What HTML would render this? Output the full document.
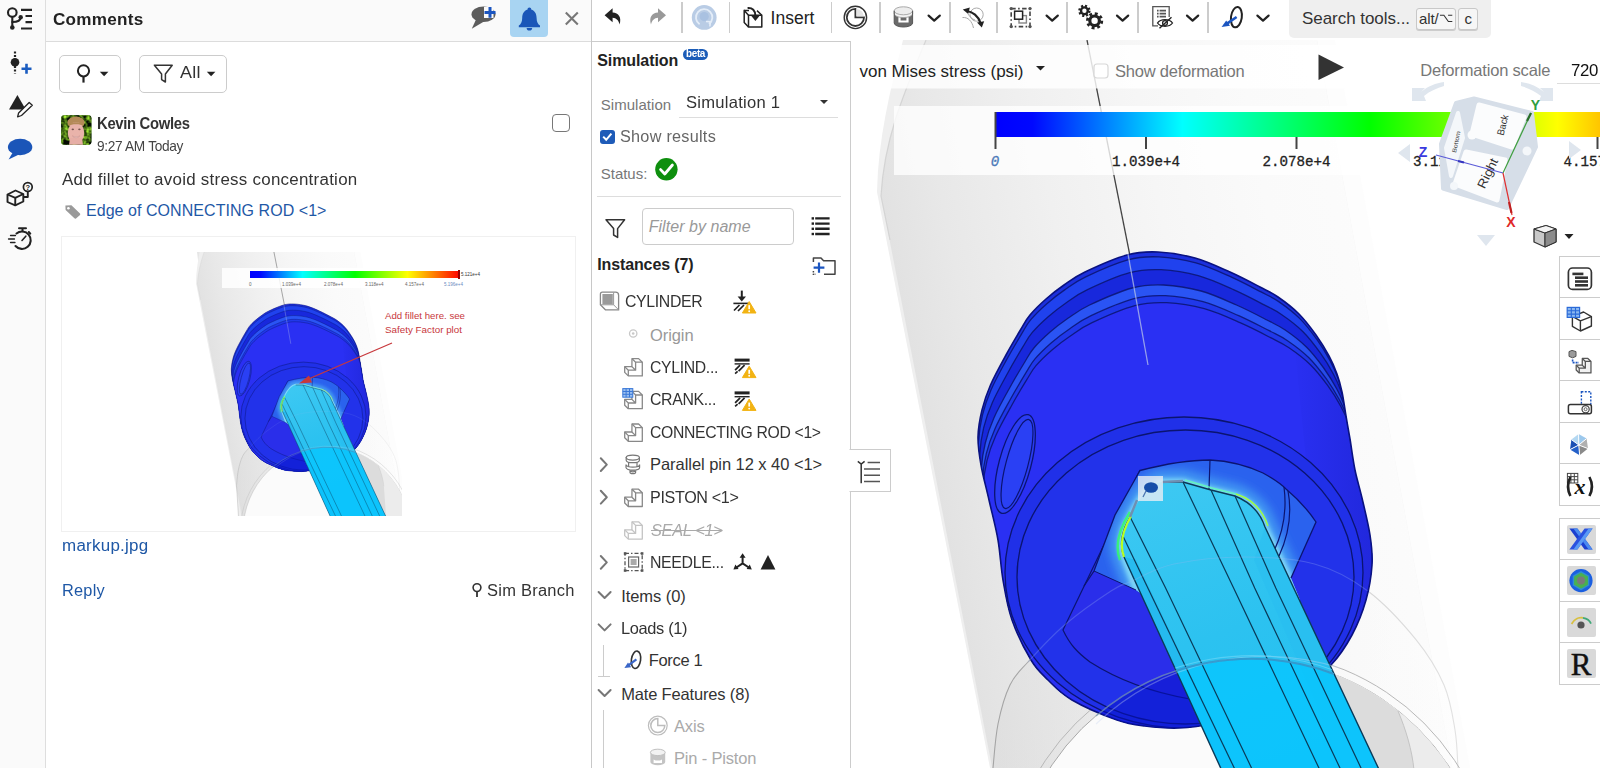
<!DOCTYPE html>
<html lang="en">
<head>
<meta charset="utf-8">
<title>Simulation - Comments</title>
<style>
*{box-sizing:border-box;margin:0;padding:0}
html,body{width:1600px;height:768px;overflow:hidden;background:#fff;font-family:"Liberation Sans",sans-serif;color:#333}
.abs{position:absolute}
.t{position:absolute;white-space:nowrap;line-height:1;font-family:"Liberation Sans",sans-serif}
#leftbar{position:absolute;left:0;top:0;width:45px;height:768px;background:#fafafa}
#lbborder{position:absolute;left:45px;top:0;width:1px;height:768px;background:#dedede}
#comments{position:absolute;left:46px;top:0;width:545px;height:768px;background:#fff}
#chead{position:absolute;left:0;top:0;width:545px;height:42px;background:#fafafa;border-bottom:1px solid #dcdcdc}
#cborder{position:absolute;left:591px;top:0;width:1px;height:768px;background:#c8c8c8}
#toolbar{position:absolute;left:592px;top:0;width:1008px;height:41px;background:#fff}
#simpanel{position:absolute;left:592px;top:41px;width:259px;height:727px;background:#fff;border-top:1px solid #ccc;border-right:1px solid #ccc}
#viewport{position:absolute;left:851px;top:40px;width:749px;height:728px;overflow:hidden}
.btn{position:absolute;border:1px solid #ccc;border-radius:4px;background:#fff}
</style>
</head>
<body>
<div id="leftbar"></div><div id="lbborder"></div>
<svg class="abs" style="left:0;top:0" width="45" height="260" viewBox="0 0 45 260">
<!-- versions/history -->
<g fill="none" stroke="#222" stroke-width="2.1" stroke-linecap="round">
<circle cx="12.3" cy="12.5" r="4.3"/>
<path d="M12.3 17 L12.3 27"/>
<path d="M12.3 22 C17 22 20.5 21.5 20.5 17.5"/>
<path d="M21 9.8 L32 9.8 M25.5 16 L32 16 M25.5 22.2 L32 22.2 M21 28.5 L32 28.5" stroke-linecap="butt" stroke-width="2.2"/>
</g>
<circle cx="12.3" cy="27.5" r="2.3" fill="#222"/><circle cx="20.7" cy="17.2" r="2.2" fill="#222"/>
<!-- version + -->
<path d="M15 51.5 L15 73.5" stroke="#222" stroke-width="2.2" stroke-dasharray="2 1.6" fill="none"/>
<circle cx="15" cy="62.2" r="4.3" fill="#222"/>
<path d="M21.5 68.7 L31.5 68.7 M26.5 63.7 L26.5 73.7" stroke="#1b5cc0" stroke-width="2.6" fill="none"/>
<!-- triangle + pencil -->
<path d="M17.4 95 L9 109.5 L25.7 109.5Z" fill="#222"/>
<path d="M29.2 102.5 L32.3 105.2 L21.5 115.5 L17.6 116.8 L18.6 113 Z" fill="#fff" stroke="#222" stroke-width="1.3" stroke-linejoin="round"/>
<!-- speech bubble -->
<ellipse cx="20.1" cy="147" rx="12.2" ry="8.2" fill="#1b55b8"/>
<path d="M13 152 L8.6 159.5 L20 154Z" fill="#1b55b8"/>
<!-- cube ? -->
<g fill="none" stroke="#222" stroke-width="1.9" stroke-linejoin="round">
<path d="M7.5 194.5 L15.5 190.5 L23.3 194 L23.3 201.5 L15.2 205.3 L7.5 202Z"/>
<path d="M7.5 194.5 L15.3 197.8 L23.3 194 M15.3 197.8 L15.2 205.3"/>
<path d="M23.3 197 L27.8 197 L27.8 192"/>
<circle cx="27.8" cy="187" r="4.4" stroke-width="1.7"/>
</g>
<text x="27.8" y="189.8" font-family="'Liberation Sans',sans-serif" font-size="7.5" font-weight="700" text-anchor="middle" fill="#222">?</text>
<!-- stopwatch -->
<g fill="none" stroke="#222" stroke-width="2.1" stroke-linecap="round">
<path d="M16.5 233.5 A8.7 8.7 0 1 1 15.5 246"/>
<path d="M19 228.3 L26 228.3 M22.5 228.3 L22.5 231.3 M28.8 232 L30.3 233.6" stroke-width="2"/>
<path d="M22 240.5 L25.8 236.2" stroke-width="1.6"/>
<path d="M10.5 235.5 L15.5 235.5 M8.5 239 L14.5 239 M10.5 242.5 L15 242.5" stroke-width="1.3"/>
</g>
</svg>
<div id="comments"><div id="chead"></div></div>
<div id="cborder"></div>
<!-- comments header -->
<span class="t" style="left:52.6px;top:11.8px;font-size:16px;font-weight:700;color:#222;letter-spacing:0.250px;transform:scaleX(1.0687);transform-origin:0 0;">Comments</span>
<div class="abs" style="left:510px;top:0;width:38px;height:37px;background:#a8d4f2;border-radius:0 0 4px 4px"></div>
<!-- buttons -->
<div class="btn" style="left:59px;top:55px;width:62px;height:38px;border-radius:5px"></div>
<div class="btn" style="left:139px;top:55px;width:88px;height:38px;border-radius:5px"></div>
<span class="t" style="left:180.0px;top:64.0px;font-size:17px;font-weight:400;color:#333;letter-spacing:0.250px;transform:scaleX(1.0538);transform-origin:0 0;">All</span>
<!-- comment -->
<span class="t" style="left:97.0px;top:114.9px;font-size:16.4px;font-weight:700;color:#333;letter-spacing:-0.350px;transform:scaleX(0.9050);transform-origin:0 0;">Kevin Cowles</span>
<span class="t" style="left:96.8px;top:138.5px;font-size:14.5px;font-weight:400;color:#444;letter-spacing:-0.350px;transform:scaleX(0.9439);transform-origin:0 0;">9:27 AM Today</span>
<div class="abs" style="left:552px;top:114px;width:18px;height:18px;border:1.5px solid #777;border-radius:4px;background:#fff"></div>
<span class="t" style="left:62.2px;top:172.0px;font-size:16px;font-weight:400;color:#333;letter-spacing:0.250px;transform:scaleX(1.0573);transform-origin:0 0;">Add fillet to avoid stress concentration</span>
<span class="t" style="left:86.0px;top:202.7px;font-size:16px;font-weight:400;color:#1f58a6;letter-spacing:0.050px;">Edge of CONNECTING ROD &lt;1&gt;</span>
<div class="abs" id="imgbox" style="left:61px;top:236px;width:515px;height:296px;border:1px solid #f0f0f0;background:#fff"></div>
<span class="t" style="left:61.5px;top:537.5px;font-size:16px;font-weight:400;color:#1f58a6;letter-spacing:0.250px;transform:scaleX(1.0594);transform-origin:0 0;">markup.jpg</span>
<span class="t" style="left:61.5px;top:582.8px;font-size:16px;font-weight:400;color:#1f58a6;letter-spacing:0.250px;transform:scaleX(1.0200);transform-origin:0 0;">Reply</span>
<span class="t" style="left:487.0px;top:582.8px;font-size:16px;font-weight:400;color:#333;letter-spacing:0.250px;transform:scaleX(1.0294);transform-origin:0 0;">Sim Branch</span>
<svg class="abs" style="left:46px;top:42px" width="545" height="570" viewBox="46 42 545 570">
<defs>
<filter id="leaf" x="0" y="0" width="100%" height="100%" color-interpolation-filters="sRGB">
<feTurbulence type="fractalNoise" baseFrequency="0.22" numOctaves="2" seed="7" result="n"/>
<feColorMatrix in="n" type="matrix" values="1.6 0 0 0 -0.55  2.2 0 0 0 -0.72  0.5 0 0 0 -0.18  0 0 0 0 1"/>

</filter>
<clipPath id="cpAv"><rect x="61.2" y="115.2" width="30.2" height="29.6" rx="3"/></clipPath>
</defs>
<!-- pin button icon -->
<circle cx="83.5" cy="70.8" r="5.6" fill="none" stroke="#222" stroke-width="2"/>
<path d="M83.5 76.4 L83.5 82.6" stroke="#222" stroke-width="2.2" fill="none"/>
<path d="M99.8 71.8 L108.4 71.8 L104.1 76.2Z" fill="#222"/>
<!-- funnel -->
<path d="M154.4 65.2 L172.2 65.2 L165.4 74 L165.4 82 L161.6 79.6 L161.6 74Z" fill="none" stroke="#333" stroke-width="1.5" stroke-linejoin="round"/>
<path d="M206.8 71.8 L215.4 71.8 L211.1 76.2Z" fill="#222"/>
<!-- avatar -->
<g clip-path="url(#cpAv)">
<rect x="61" y="115" width="31" height="30" fill="#2c6414"/>
<rect x="61" y="115" width="31" height="30" filter="url(#leaf)" opacity="0.9"/>
<ellipse cx="76" cy="122.5" rx="8.6" ry="6" fill="#b48a58"/>
<ellipse cx="76" cy="133" rx="8.2" ry="11" fill="#e9b3aa"/>
<path d="M69 145 L70 138 L82 138 L83 145Z" fill="#e6aea6"/>
<path d="M68.5 126 C70 121 82 121 83.5 126 C81 123.6 71 123.6 68.5 126Z" fill="#b48a58"/>
<ellipse cx="72.8" cy="129.4" rx="1.2" ry="0.8" fill="#7a5650"/><ellipse cx="79.4" cy="129.4" rx="1.2" ry="0.8" fill="#7a5650"/>
<path d="M72.4 136 C74.4 138.2 77.8 138.2 79.8 136 C77.8 137 74.4 137 72.4 136Z" fill="#fff" stroke="#c98a84" stroke-width="0.6"/>
</g>
<!-- tag -->
<path d="M65.4 205.6 L71.4 205.2 L80 213.4 Q80.6 214.2 80 215 L76 218.4 Q75.2 219 74.4 218.2 L65.6 210Z" fill="#9a9a9a"/>
<circle cx="68.4" cy="208.2" r="1.3" fill="#fff"/>
<!-- sim branch pin -->
<circle cx="477" cy="587.6" r="3.9" fill="none" stroke="#333" stroke-width="1.6"/>
<path d="M477 591.6 L477 597" stroke="#333" stroke-width="1.8" fill="none"/>
</svg>
<svg class="abs" style="left:62px;top:237px" width="513" height="294" viewBox="62 237 513 294">
<defs><clipPath id="cpThumb"><rect x="190" y="252" width="212" height="264"/></clipPath></defs>
<g clip-path="url(#cpThumb)">
<path d="M197 252 L232 252 L232 336 L207.5 336Z" fill="#e6e6e6"/>
<use href="#scene" transform="translate(-111,215.3) scale(0.35,0.352)"/>
</g>
<!-- legend -->
<rect x="222" y="268" width="258" height="20" fill="#fff" fill-opacity="0.85"/>
<rect x="250" y="271" width="210" height="7" fill="url(#gLegend)"/>
<rect x="458" y="270" width="2" height="9" fill="#900"/>
<g font-family="'Liberation Sans',sans-serif" font-size="4.5" fill="#666">
<text x="249" y="286">0</text><text x="282" y="286">1.039e+4</text><text x="324" y="286">2.078e+4</text><text x="365" y="286">3.118e+4</text><text x="405" y="286">4.157e+4</text><text x="444" y="286" fill="#6a8ac0">5.196e+4</text><text x="461" y="276" fill="#333">5.121e+4</text>
</g>
<!-- annotation -->
<g font-family="'Liberation Sans',sans-serif" font-size="9.3" fill="#c8383c">
<text x="385" y="319" textLength="80" lengthAdjust="spacingAndGlyphs">Add fillet here. see</text>
<text x="385" y="333" textLength="77" lengthAdjust="spacingAndGlyphs">Safety Factor plot</text>
</g>
<path d="M392 343 L306 380" stroke="#c8383c" stroke-width="1.3" fill="none"/>
<path d="M299 383.5 L309 375.5 L312 382.5Z" fill="#c8383c"/>
</svg>
<div id="toolbar"></div>
<div class="abs" style="left:1289px;top:0;width:202px;height:38px;background:#efefef;border-radius:0 0 5px 5px"></div>
<span class="t" style="left:770.5px;top:10.2px;font-size:17.5px;font-weight:400;color:#222;letter-spacing:0.039px;">Insert</span>
<span class="t" style="left:1302.0px;top:10.0px;font-size:17px;font-weight:400;color:#333;letter-spacing:-0.044px;">Search tools...</span>
<div class="abs" style="left:1416px;top:8px;width:40px;height:22px;border:1px solid #c8c8c8;border-radius:3px;background:#f6f6f6;box-shadow:0 1px 0 #ccc"></div>
<div class="abs" style="left:1458px;top:8px;width:20px;height:22px;border:1px solid #c8c8c8;border-radius:3px;background:#f6f6f6;box-shadow:0 1px 0 #ccc"></div>
<span class="t" style="left:1419.0px;top:11.3px;font-size:15px;font-weight:400;color:#333;letter-spacing:-0.127px;">alt/</span><span class="t" style="left:1438.8px;top:10.5px;font-size:13px;color:#333;font-family:'DejaVu Sans',sans-serif;transform:scaleX(0.95);transform-origin:0 0">⌥</span>
<span class="t" style="left:1464.5px;top:11.3px;font-size:15px;font-weight:400;color:#333;letter-spacing:0.000px;">c</span>
<!-- separators -->
<div class="abs" style="left:681px;top:2px;width:1.5px;height:31px;background:#ccc"></div>
<div class="abs" style="left:728.5px;top:2px;width:1.5px;height:31px;background:#ccc"></div>
<div class="abs" style="left:830.5px;top:2px;width:1.5px;height:31px;background:#ccc"></div>
<div class="abs" style="left:879px;top:2px;width:1.5px;height:31px;background:#ccc"></div>
<div class="abs" style="left:949px;top:2px;width:1.5px;height:31px;background:#ccc"></div>
<div class="abs" style="left:996px;top:2px;width:1.5px;height:31px;background:#ccc"></div>
<div class="abs" style="left:1066px;top:2px;width:1.5px;height:31px;background:#ccc"></div>
<div class="abs" style="left:1137px;top:2px;width:1.5px;height:31px;background:#ccc"></div>
<div class="abs" style="left:1207px;top:2px;width:1.5px;height:31px;background:#ccc"></div>
<svg class="abs" style="left:460px;top:0" width="1140" height="41" viewBox="460 0 1140 41">
<!-- comment+ -->
<ellipse cx="483.5" cy="14.2" rx="12" ry="7.8" fill="#5c5c5c"/>
<path d="M476 19.5 L471.8 28.8 L484 21.5Z" fill="#5c5c5c"/>
<rect x="484" y="7" width="9.5" height="11" fill="#fafafa"/>
<path d="M484.5 12.4 L495.5 12.4 M490 7 L490 17.8" stroke="#1b55c0" stroke-width="3" fill="none"/>
<!-- bell -->
<path d="M529.4 7.6 C530.6 7.6 531.2 8.4 531.2 9.4 C535 10.6 536.6 13.8 536.6 18 C536.6 22 538 24.2 540 25.6 L540 27.2 L518.8 27.2 L518.8 25.6 C520.8 24.2 522.2 22 522.2 18 C522.2 13.8 523.8 10.6 527.6 9.4 C527.6 8.4 528.2 7.6 529.4 7.6Z" fill="#1a56b8"/>
<path d="M526.6 28 L532.2 28 C532.2 29.6 531 30.6 529.4 30.6 C527.8 30.6 526.6 29.6 526.6 28Z" fill="#1a56b8"/>
<!-- close -->
<path d="M565.8 12.6 L577.8 24.6 M577.8 12.6 L565.8 24.6" stroke="#777" stroke-width="2.1" fill="none"/>
<!-- undo -->
<path d="M604.6 15.2 L612.6 8.2 L612.6 12.6 C618.6 12.8 621.8 17.4 619.6 24.6 C618.6 20.4 616.4 18 612.6 17.8 L612.6 22.2Z" fill="#222"/>
<!-- redo -->
<path d="M666 15.2 L658 8.2 L658 12.6 C652 12.8 648.8 17.4 651 24.6 C652 20.4 654.2 18 658 17.8 L658 22.2Z" fill="#999"/>
<!-- rebuild circle (disabled) -->
<circle cx="704.2" cy="17.4" r="12.4" fill="#b9cce5"/>
<path d="M699.6 24.2 A8.2 8.2 0 1 1 709 24" fill="none" stroke="#e4edf8" stroke-width="1.8"/>
<path d="M706 21.5 L710.5 21.8 L709.8 26.5" fill="none" stroke="#e4edf8" stroke-width="1.6"/>
<circle cx="704.2" cy="16.6" r="4.6" fill="#a9c1e1"/>
<!-- insert -->
<g fill="none" stroke="#222" stroke-width="1.5" stroke-linejoin="round">
<path d="M748.5 15.2 L761.8 15.2 L761.8 27 L748.5 27Z" fill="#fff"/>
<path d="M748.5 15.2 L744.2 10.4 L744.2 22.6 L748.5 27"/>
<path d="M744.2 10.4 L749 10.4 M757 10.6 L761.8 15.2"/>
<path d="M747.6 8 C752.4 7.6 755.4 10.4 755.4 16" stroke-width="2"/>
</g>
<path d="M751 15.6 L759.8 15.6 L755.4 21Z" fill="#222"/>
<!-- clock/mate -->
<g fill="none" stroke="#333">
<circle cx="855.4" cy="17.4" r="11.2" stroke-width="1.4"/>
<path d="M855.4 8.8 A8.6 8.6 0 1 0 864 17.4 L855.4 17.4Z" stroke-width="1.8"/>
</g>
<path d="M856.6 8.9 A8.6 8.6 0 0 1 863.9 16.2 L856.6 16.2Z" fill="#e3e3e3"/>
<!-- cylinder/fastened -->
<path d="M894.2 10.8 L894.2 23 A9.2 4 0 0 0 912.6 23 L912.6 10.8Z" fill="#6a6a6a"/>
<path d="M894.2 10.8 L894.2 13.6 A9.2 4 0 0 0 912.6 13.6 L912.6 10.8Z" fill="#f2f2f2" stroke="#999" stroke-width="0.8"/>
<ellipse cx="903.4" cy="10.8" rx="9.2" ry="4" fill="#ededed" stroke="#aaa" stroke-width="1"/>
<path d="M898.4 17.2 L898.4 22.6 L908.6 22.6 L908.6 17.2 L906.4 17.8 L906.4 20.6 L900.6 20.6 L900.6 17.8Z" fill="#fff"/>
<path d="M894.2 10.8 L894.2 23 A9.2 4 0 0 0 912.6 23 L912.6 10.8" fill="none" stroke="#555" stroke-width="1"/>
<!-- chevrons -->
<g fill="none" stroke="#222" stroke-width="2.2" stroke-linecap="round" stroke-linejoin="round">
<path d="M928.6 15.6 L934.2 20.6 L939.8 15.6"/>
<path d="M1046.6 15.6 L1052.2 20.6 L1057.8 15.6"/>
<path d="M1117 15.6 L1122.6 20.6 L1128.2 15.6"/>
<path d="M1187 15.6 L1192.6 20.6 L1198.2 15.6"/>
<path d="M1257.4 15.6 L1263 20.6 L1268.6 15.6"/>
</g>
<!-- animate arrows -->
<circle cx="976.6" cy="14.6" r="6.6" fill="none" stroke="#aaa" stroke-width="1"/>
<path d="M962.5 17.5 C968 17 972 21 973.5 28 M968 14 C970 17 972 19 975 20" fill="none" stroke="#aaa" stroke-width="1"/>
<path d="M966.5 11 C972.5 11.5 978.5 16 980.5 23" fill="none" stroke="#222" stroke-width="2.2"/>
<path d="M962.8 9.4 L969.8 7.6 L968.2 14Z" fill="#222"/>
<path d="M981.8 27.6 L977 22.4 L984.2 21.2Z" fill="#222"/>
<!-- select other -->
<g fill="none" stroke="#444">
<rect x="1011.2" y="8.6" width="18.8" height="18" stroke-width="1.6" stroke-dasharray="4.5 2.4 1.6 2.4"/>
<rect x="1019" y="15.6" width="7.4" height="7.4" stroke="#888" stroke-width="1.4"/>
<rect x="1014.6" y="11.2" width="8" height="8" stroke="#222" stroke-width="1.5" fill="#fff"/>
</g>
<g fill="#555"><circle cx="1011.2" cy="8.6" r="1.7"/><circle cx="1030" cy="8.6" r="1.7"/><circle cx="1011.2" cy="26.6" r="1.7"/><circle cx="1030" cy="26.6" r="1.7"/></g>
<!-- gears -->
<g fill="none" stroke="#222">
<circle cx="1084.4" cy="10.8" r="3.4" stroke-width="2.4"/>
<circle cx="1084.4" cy="10.8" r="5" stroke-width="2.4" stroke-dasharray="2 1.93"/>
<circle cx="1094.6" cy="20.8" r="4.8" stroke-width="3.2"/>
<circle cx="1094.6" cy="20.8" r="7.2" stroke-width="2.8" stroke-dasharray="2.9 2.75"/>
</g>
<!-- doc + eye -->
<g fill="none" stroke="#555" stroke-width="1.3">
<path d="M1169.2 17 L1169.2 6.6 L1152.8 6.6 L1152.8 25.8 L1158 25.8"/>
<path d="M1157 10.6 L1166 10.6 M1157 13.6 L1166 13.6 M1157 16.6 L1166 16.6" stroke-width="1.7" stroke-dasharray="1.6 1 20"/>
<path d="M1157.5 23 C1160.5 18.6 1169.5 18.6 1172.5 23 C1169.5 27.4 1160.5 27.4 1157.5 23Z" stroke="#222" stroke-width="1.3"/>
<circle cx="1165" cy="23" r="2.4" stroke="#222"/>
<path d="M1159.5 28.2 L1171.5 17.2" stroke="#222" stroke-width="1.4"/>
</g>
<!-- force -->
<ellipse cx="1236.4" cy="17.2" rx="5.4" ry="10.2" transform="rotate(8 1236.4 17.2)" fill="none" stroke="#222" stroke-width="2"/>
<path d="M1236.6 17 L1227 23.6" stroke="#1b55c0" stroke-width="2.6" fill="none"/>
<path d="M1221.6 27 L1226.2 20.4 L1230 25.8Z" fill="#1b55c0"/>
</svg>
<div id="simpanel"></div>
<span class="t" style="left:597.2px;top:53.2px;font-size:16px;font-weight:700;color:#222;letter-spacing:-0.078px;">Simulation</span>
<div class="abs" style="left:682.5px;top:49px;width:25px;height:11px;background:#1b5cb8;border-radius:6px"></div>
<span class="t" style="left:685.5px;top:49.1px;font-size:10px;font-weight:700;color:#fff;letter-spacing:-0.350px;transform:scaleX(0.9916);transform-origin:0 0;">beta</span>
<span class="t" style="left:600.8px;top:96.5px;font-size:15px;font-weight:400;color:#777;letter-spacing:0.037px;">Simulation</span>
<span class="t" style="left:686.2px;top:94.3px;font-size:16.5px;font-weight:400;color:#333;letter-spacing:0.250px;transform:scaleX(1.0053);transform-origin:0 0;">Simulation 1</span>
<div class="abs" style="left:678.5px;top:116.5px;width:159px;height:1px;background:#ddd"></div>
<div class="abs" style="left:820px;top:99.5px;width:0;height:0;border-left:4.5px solid transparent;border-right:4.5px solid transparent;border-top:4.5px solid #333"></div>
<div class="abs" style="left:600px;top:129.5px;width:14.5px;height:14.5px;background:#1e5bb8;border-radius:3px"></div>
<span class="t" style="left:620.0px;top:129.0px;font-size:16px;font-weight:400;color:#666;letter-spacing:0.250px;transform:scaleX(1.0149);transform-origin:0 0;">Show results</span>
<span class="t" style="left:600.8px;top:165.8px;font-size:15px;font-weight:400;color:#777;letter-spacing:-0.027px;">Status:</span>
<div class="abs" style="left:597px;top:196px;width:244px;height:1px;background:#ddd"></div>
<div class="abs" style="left:641.5px;top:208px;width:152px;height:37px;border:1px solid #ccc;border-radius:4px;background:#fff"></div>
<span class="t" style="left:648.7px;top:218.8px;font-size:16px;font-weight:400;color:#999;letter-spacing:0.045px;font-style:italic;">Filter by name</span>
<span class="t" style="left:597.2px;top:257.3px;font-size:16px;font-weight:700;color:#222;letter-spacing:-0.116px;">Instances (7)</span>
<span class="t" style="left:625.0px;top:293.3px;font-size:16.5px;font-weight:400;color:#333;letter-spacing:-0.350px;transform:scaleX(0.9599);transform-origin:0 0;">CYLINDER</span>
<span class="t" style="left:650.0px;top:326.6px;font-size:16.5px;font-weight:400;color:#999;letter-spacing:-0.086px;">Origin</span>
<span class="t" style="left:650.0px;top:358.5px;font-size:16.5px;font-weight:400;color:#333;letter-spacing:-0.350px;transform:scaleX(0.9562);transform-origin:0 0;">CYLIND...</span>
<span class="t" style="left:650.0px;top:391.2px;font-size:16.5px;font-weight:400;color:#333;letter-spacing:-0.350px;transform:scaleX(0.9606);transform-origin:0 0;">CRANK...</span>
<span class="t" style="left:650.0px;top:424.0px;font-size:16.5px;font-weight:400;color:#333;letter-spacing:-0.350px;transform:scaleX(0.9542);transform-origin:0 0;">CONNECTING ROD &lt;1&gt;</span>
<span class="t" style="left:650.0px;top:456.4px;font-size:16.5px;font-weight:400;color:#333;letter-spacing:-0.049px;">Parallel pin 12 x 40 &lt;1&gt;</span>
<span class="t" style="left:650.0px;top:489.0px;font-size:16.5px;font-weight:400;color:#333;letter-spacing:-0.350px;transform:scaleX(0.9762);transform-origin:0 0;">PISTON &lt;1&gt;</span>
<span class="t" style="left:651.4px;top:522.0px;font-size:16.5px;font-weight:400;color:#aaa;letter-spacing:-0.350px;font-style:italic;text-decoration:line-through;transform:scaleX(0.9913);transform-origin:0 0;">SEAL &lt;1&gt;</span>
<span class="t" style="left:650.0px;top:554.0px;font-size:16.5px;font-weight:400;color:#333;letter-spacing:-0.350px;transform:scaleX(0.9618);transform-origin:0 0;">NEEDLE...</span>
<span class="t" style="left:621.2px;top:587.7px;font-size:16.5px;font-weight:400;color:#333;letter-spacing:-0.066px;">Items (0)</span>
<span class="t" style="left:621.2px;top:620.0px;font-size:16.5px;font-weight:400;color:#333;letter-spacing:-0.350px;transform:scaleX(0.9946);transform-origin:0 0;">Loads (1)</span>
<span class="t" style="left:648.7px;top:652.3px;font-size:16.5px;font-weight:400;color:#333;letter-spacing:-0.320px;">Force 1</span>
<span class="t" style="left:621.2px;top:685.5px;font-size:16.5px;font-weight:400;color:#333;letter-spacing:-0.166px;">Mate Features (8)</span>
<span class="t" style="left:674.0px;top:717.7px;font-size:16.5px;font-weight:400;color:#aaa;letter-spacing:-0.168px;">Axis</span>
<span class="t" style="left:674.0px;top:750.2px;font-size:16.5px;font-weight:400;color:#aaa;letter-spacing:-0.181px;">Pin - Piston</span>
<!-- tree lines -->
<div class="abs" style="left:603px;top:645px;width:1px;height:31px;background:#ccc"></div>
<div class="abs" style="left:598px;top:676px;width:12px;height:1px;background:#ccc"></div>
<div class="abs" style="left:603px;top:710px;width:1px;height:58px;background:#ccc"></div>
<svg class="abs" style="left:592px;top:42px" width="258" height="726" viewBox="592 42 258 726">
<defs>
<g id="icPart" fill="none" stroke-width="1.3" stroke-linejoin="round">
<path d="M8 1 L14.6 1 L18.3 4.6 L18.3 18.3 L4.3 18.3 L0.7 14.8 L0.7 9 L7.9 9Z" fill="#fff"/>
<path d="M4.3 18.3 L4.3 12.6 L0.7 9 M4.3 12.6 L11.6 12.6 L11.6 4.6 L8 1 M11.6 4.6 L18.3 4.6 M11.6 12.6 L7.9 9"/>
</g>
<g id="icWarn">
<path d="M7.2 0.6 L14 12 L0.4 12Z" fill="#f2b313" stroke="#f2b313" stroke-width="1" stroke-linejoin="round"/>
<path d="M7.2 4.2 L7.2 8.2" stroke="#fff" stroke-width="1.7"/><circle cx="7.2" cy="10.2" r="0.95" fill="#fff"/>
</g>
<g id="icFix2" >
<rect x="0" y="0" width="15" height="3" fill="#222"/>
<rect x="0" y="4.6" width="15" height="1.4" fill="#222"/>
<path d="M0.5 11.5 L5.5 6.5 M4 12.5 L10 6.5 M0.5 15 L3 12.8" stroke="#222" stroke-width="1.7" fill="none"/>
</g>
</defs>
<!-- show results check -->
<path d="M603.2 136.6 L606.2 139.8 L611.4 133.6" fill="none" stroke="#fff" stroke-width="2"/>
<!-- status -->
<circle cx="666.4" cy="169.3" r="11.2" fill="#0e8f0e"/>
<path d="M660.6 169.6 L664.8 174 L672.4 165" fill="none" stroke="#fff" stroke-width="2.8" stroke-linecap="round" stroke-linejoin="round"/>
<!-- funnel -->
<path d="M606 219.8 L624.6 219.8 L617.6 228.6 L617.6 237.4 L613.6 235 L613.6 228.6Z" fill="none" stroke="#333" stroke-width="1.5" stroke-linejoin="round"/>
<!-- list icon -->
<g stroke="#222" stroke-width="2.4"><path d="M815.2 218.4 L829.6 218.4 M815.2 223.6 L829.6 223.6 M815.2 228.8 L829.6 228.8 M815.2 234 L829.6 234"/></g>
<g fill="#222"><rect x="811.6" y="217.2" width="2.4" height="2.4"/><rect x="811.6" y="222.4" width="2.4" height="2.4"/><rect x="811.6" y="227.6" width="2.4" height="2.4"/><rect x="811.6" y="232.8" width="2.4" height="2.4"/></g>
<!-- folder + -->
<path d="M813.4 262 L813.4 258 L821 258 L823.6 260.8 L835 260.8 L835 274.2 L824 274.2" fill="none" stroke="#444" stroke-width="1.5" stroke-linejoin="round"/>
<path d="M813.4 271 L813.4 274.2 L816 274.2" fill="none" stroke="#444" stroke-width="1.5" stroke-dasharray="1.5 1.2"/>
<path d="M813.6 267.6 L824.4 267.6 M819 262.4 L819 272.8" stroke="#1b55c0" stroke-width="2.2" fill="none"/>
<!-- CYLINDER assembly icon -->
<path d="M602.4 292.2 L615.6 292.2 Q618.6 292.2 618.6 295.2 L618.6 309.8 L605.4 309.8 L600.4 304.8 L600.4 294.2 Q600.4 292.2 602.4 292.2Z" fill="#fff" stroke="#888" stroke-width="1.3"/>
<path d="M600.4 304.8 L613.6 304.8 L618.6 309.8 M613.6 304.8 L613.6 292.4" fill="none" stroke="#999" stroke-width="1"/>
<rect x="602.4" y="294" width="10.4" height="10.4" fill="#9a9a9a"/>
<!-- fix + warn -->
<path d="M741.8 290.6 L741.8 299.5" stroke="#222" stroke-width="2" fill="none"/>
<path d="M737.6 296.6 L746 296.6 L741.8 301.6Z" fill="#222"/>
<rect x="733.4" y="302.6" width="15" height="1.6" fill="#222"/>
<path d="M734 310.5 L739.5 305 M738 311 L744 305" stroke="#222" stroke-width="1.7" fill="none"/>
<use href="#icWarn" x="742" y="301"/>
<!-- origin -->
<circle cx="633.2" cy="333.5" r="3.7" fill="none" stroke="#c8c8c8" stroke-width="1.3"/><circle cx="633.2" cy="333.5" r="1.3" fill="#c8c8c8"/>
<!-- part icons -->
<use href="#icPart" x="624" y="357.6" stroke="#888"/>
<use href="#icPart" x="624" y="390.4" stroke="#888"/>
<use href="#icPart" x="624" y="423" stroke="#888"/>
<use href="#icPart" x="624" y="488.2" stroke="#888"/>
<use href="#icPart" x="624" y="520.8" stroke="#c4c4c4"/>
<!-- crank blue grid -->
<rect x="622.8" y="388.6" width="10" height="8.6" fill="#9cc0f0" stroke="#3a78d8" stroke-width="1"/>
<path d="M626.1 388.6 L626.1 397.2 M629.5 388.6 L629.5 397.2 M622.8 391.5 L632.8 391.5 M622.8 394.3 L632.8 394.3" stroke="#3a78d8" stroke-width="1" fill="none"/>
<!-- constraints -->
<use href="#icFix2" x="734.6" y="358.6"/><use href="#icWarn" x="742" y="365.6"/>
<use href="#icFix2" x="734.6" y="391.4"/><use href="#icWarn" x="742" y="398.4"/>
<!-- chevrons right -->
<g fill="none" stroke="#777" stroke-width="2" stroke-linecap="round" stroke-linejoin="round">
<path d="M600.8 458.2 L606.8 464.6 L600.8 471"/>
<path d="M600.8 490.8 L606.8 497.2 L600.8 503.6"/>
<path d="M600.8 556 L606.8 562.4 L600.8 568.8"/>
<!-- chevrons down -->
<path d="M598.6 592 L604.6 598 L610.6 592"/>
<path d="M598.6 624.4 L604.6 630.4 L610.6 624.4"/>
<path d="M598.6 690 L604.6 696 L610.6 690"/>
</g>
<!-- parallel pin icon -->
<g fill="#fff" stroke="#777" stroke-width="1.2">
<path d="M628.6 462 L628.6 468.4 A4.2 1.8 0 0 0 637 468.4 L637 462Z"/>
<path d="M626 464.6 A6.8 2.6 0 0 0 639.6 464.6 L639.6 467.6 A6.8 2.6 0 0 1 626 467.6Z"/>
<path d="M630 470.6 A2.8 1.2 0 0 0 635.6 470.6 L635.6 472.4 A2.8 1.2 0 0 1 630 472.4Z"/>
<path d="M626.2 457.6 L626.2 460.2 A6.6 2.5 0 0 0 639.4 460.2 L639.4 457.6Z"/>
<ellipse cx="632.8" cy="457.6" rx="6.6" ry="2.5"/>
</g>
<!-- needle subassembly icon -->
<rect x="625" y="553.4" width="17.2" height="17.2" fill="none" stroke="#555" stroke-width="1.3" stroke-dasharray="4 2 1.5 2"/>
<g fill="#555"><rect x="623.8" y="552.2" width="2.6" height="2.6"/><rect x="640.8" y="552.2" width="2.6" height="2.6"/><rect x="623.8" y="569.2" width="2.6" height="2.6"/><rect x="640.8" y="569.2" width="2.6" height="2.6"/></g>
<rect x="628.6" y="557" width="10" height="10" fill="#fff" stroke="#666" stroke-width="1.2"/><rect x="630.6" y="559" width="6" height="6" fill="#aaa"/>
<!-- mate connector icon -->
<g stroke="#222" stroke-width="2" fill="none"><path d="M742.6 556 L742.6 563.4 L735.6 568 M742.6 563.4 L749.6 568"/></g>
<path d="M742.6 553.2 L745.6 557.8 L739.6 557.8Z M733.4 569.6 L735.4 564.6 L738.6 569Z M751.8 569.6 L749.8 564.6 L746.6 569Z" fill="#222"/>
<path d="M768 555 L775.4 569.4 L760.6 569.4Z" fill="#222"/>
<!-- force icon -->
<ellipse cx="636" cy="659.8" rx="4.6" ry="8.8" transform="rotate(8 636 659.8)" fill="none" stroke="#333" stroke-width="1.6"/>
<path d="M636.4 659.4 L628.4 665.4" stroke="#3a66c8" stroke-width="2.2" fill="none"/>
<path d="M624.4 668 L628 662.6 L631.2 667.2Z" fill="#3a66c8"/>
<!-- axis icon (disabled) -->
<g fill="none" stroke="#bdbdbd"><circle cx="657.8" cy="725.6" r="9.4" stroke-width="1.2"/><path d="M657.8 718.6 A7 7 0 1 0 664.8 725.6 L657.8 725.6Z" stroke-width="1.5"/></g>
<!-- pin-piston icon (disabled) -->
<path d="M650.4 752.4 L650.4 762 A7.4 3.2 0 0 0 665.2 762 L665.2 752.4Z" fill="#c4c4c4"/>
<ellipse cx="657.8" cy="752.4" rx="7.4" ry="3.2" fill="#f2f2f2" stroke="#c0c0c0" stroke-width="1"/>
<path d="M653.6 759.6 L653.6 763 L662 763 L662 759.6 L660 760.4 L655.6 760.4Z" fill="#fff"/>
</svg>
<div id="viewport">
<svg class="abs" style="left:0;top:0" width="749" height="728" viewBox="851 40 749 728">
<defs>
<linearGradient id="gTube" gradientUnits="userSpaceOnUse" x1="900" y1="400" x2="1420" y2="300">
<stop offset="0" stop-color="#e0e0e0"/><stop offset="0.15" stop-color="#e8e8e8"/><stop offset="0.35" stop-color="#f0f0f0"/><stop offset="0.55" stop-color="#f6f6f6"/><stop offset="0.75" stop-color="#fafafa"/><stop offset="1" stop-color="#fcfcfc"/>
</linearGradient>
<linearGradient id="gLegend" x1="0" y1="0" x2="1" y2="0">
<stop offset="0" stop-color="#0000ff"/><stop offset="0.05" stop-color="#0008ff"/><stop offset="0.25" stop-color="#00ffff"/><stop offset="0.5" stop-color="#00ff00"/><stop offset="0.75" stop-color="#ffff00"/><stop offset="1" stop-color="#ff0000"/>
</linearGradient>
<radialGradient id="gPiston" gradientUnits="userSpaceOnUse" cx="1150" cy="420" r="260">
<stop offset="0" stop-color="#2436ee"/><stop offset="0.6" stop-color="#1f2fe8"/><stop offset="1" stop-color="#1826d6"/>
</radialGradient>
<linearGradient id="gPistR" gradientUnits="userSpaceOnUse" x1="1290" y1="0" x2="1375" y2="0"><stop offset="0" stop-color="#1018b0" stop-opacity="0"/><stop offset="1" stop-color="#1018b0" stop-opacity="0.35"/></linearGradient>
<filter id="blur8" x="-20%" y="-20%" width="140%" height="140%"><feGaussianBlur stdDeviation="5"/></filter>
<filter id="blur3" x="-20%" y="-20%" width="140%" height="140%"><feGaussianBlur stdDeviation="2"/></filter>
<filter id="blur1" x="-20%" y="-20%" width="140%" height="140%"><feGaussianBlur stdDeviation="0.7"/></filter>
<linearGradient id="gRod" gradientUnits="userSpaceOnUse" x1="1190" y1="480" x2="1300" y2="768"><stop offset="0" stop-color="#3cc8f2"/><stop offset="0.5" stop-color="#2cc2f0"/><stop offset="1" stop-color="#22c0f2"/></linearGradient>
<clipPath id="cpPocket"><path d="M1140 470.5 C1165 464 1188 460 1210 460 C1230 461 1248 466 1263 473 C1272 478 1280 483 1286 489 C1298 499 1308 510 1316 522 L1291 578 L1300 600 L1150 600 L1136 590 L1094 571 L1115 515 Z"/></clipPath>
<linearGradient id="gEndFill" gradientUnits="userSpaceOnUse" x1="1000" y1="0" x2="1460" y2="0"><stop offset="0" stop-color="#dcdcdc" stop-opacity="0.5"/><stop offset="0.35" stop-color="#e8e8e8" stop-opacity="0.3"/><stop offset="1" stop-color="#ffffff" stop-opacity="0.35"/></linearGradient>
<linearGradient id="gEndStroke" gradientUnits="userSpaceOnUse" x1="1000" y1="0" x2="1460" y2="0"><stop offset="0" stop-color="#a4a4a4"/><stop offset="0.6" stop-color="#cccccc"/><stop offset="1" stop-color="#e2e2e2"/></linearGradient>
<clipPath id="cpRod"><path d="M1162 482 L1183 482 L1211 490 L1235 496 C1250 502 1260 512 1265 527 L1431 880 L1272 880 L1124 557 C1119 545 1122 530 1130 517 C1138 500 1148 484 1162 482Z"/></clipPath>
<clipPath id="cpInner"><circle cx="1250" cy="897" r="238"/></clipPath>
<clipPath id="cpPiston"><path d="M1158.0 252.0 C1169.3 252.5 1183.0 254.7 1195.0 258.0 C1207.0 261.3 1219.2 267.2 1230.0 272.0 C1240.8 276.8 1252.0 282.8 1260.0 287.0 C1268.0 291.2 1271.5 292.5 1278.0 297.0 C1284.5 301.5 1292.7 307.7 1299.0 314.0 C1305.3 320.3 1311.0 328.0 1316.0 335.0 C1321.0 342.0 1325.5 349.5 1329.0 356.0 C1332.5 362.5 1334.8 368.0 1337.0 374.0 C1339.2 380.0 1340.5 385.0 1342.0 392.0 C1343.5 399.0 1344.7 408.2 1346.0 416.0 C1347.3 423.8 1348.5 430.0 1350.0 439.0 C1351.5 448.0 1353.0 460.2 1355.0 470.0 C1357.0 479.8 1359.5 487.2 1362.0 498.0 C1364.5 508.8 1368.3 523.8 1370.0 535.0 C1371.7 546.2 1372.7 554.2 1372.0 565.0 C1371.3 575.8 1369.3 588.3 1366.0 600.0 C1362.7 611.7 1357.8 624.2 1352.0 635.0 C1346.2 645.8 1339.7 655.8 1331.0 665.0 C1322.3 674.2 1311.8 682.5 1300.0 690.0 C1288.2 697.5 1274.2 704.5 1260.0 710.0 C1245.8 715.5 1228.5 720.0 1215.0 723.0 C1201.5 726.0 1190.7 727.5 1179.0 728.0 C1167.3 728.5 1155.3 727.3 1145.0 726.0 C1134.7 724.7 1129.2 724.3 1117.0 720.0 C1104.8 715.7 1083.5 706.7 1072.0 700.0 C1060.5 693.3 1054.8 686.7 1048.0 680.0 C1041.2 673.3 1037.0 670.0 1031.0 660.0 C1025.0 650.0 1016.7 633.3 1012.0 620.0 C1007.3 606.7 1005.3 593.3 1003.0 580.0 C1000.7 566.7 1000.3 553.3 998.0 540.0 C995.7 526.7 991.8 512.5 989.0 500.0 C986.2 487.5 982.8 475.5 981.0 465.0 C979.2 454.5 977.8 446.2 978.0 437.0 C978.2 427.8 979.9 418.7 982.0 410.0 C984.1 401.3 986.5 394.2 990.5 385.0 C994.5 375.8 1000.9 364.3 1006.0 355.0 C1011.1 345.7 1017.0 335.7 1021.0 329.0 C1025.0 322.3 1025.8 320.0 1030.0 315.0 C1034.2 310.0 1040.3 304.0 1046.0 299.0 C1051.7 294.0 1057.5 289.5 1064.0 285.0 C1070.5 280.5 1074.5 277.0 1085.0 272.0 C1095.5 267.0 1114.8 258.3 1127.0 255.0 C1139.2 251.7 1146.7 251.5 1158.0 252.0Z"/></clipPath>
</defs>
<rect x="851" y="40" width="749" height="728" fill="#fff"/>
<g id="scene">
<!-- outer tube body -->
<g id="tube">
<path d="M903 40 C890 90 878 140 877 192 L1012 880 L1480 880 L1324 40Z" fill="#efefef"/>
<path d="M926 40 C903 95 884 140 881 196 L1014 880 L1473 880 L1317 40Z" fill="url(#gTube)"/>
<path d="M926 40 C903 95 884 140 881 196 L890 240" fill="none" stroke="#cfcfcf" stroke-width="1.2" stroke-opacity="0.8"/>
<!-- soft right edge -->
<path d="M1317 40 L1473 880 L1491 880 L1335 40Z" fill="#fdfdfd"/>
</g>
<!-- tube bottom end -->
<g id="tubeEnd" fill="none">
<path d="M993.0 768.0 C993.8 760.7 995.2 737.8 998.0 724.0 C1000.8 710.2 1005.0 695.3 1010.0 685.0 C1015.0 674.7 1018.9 672.0 1028.0 662.0 C1037.1 652.0 1050.8 636.8 1064.6 625.0 C1078.4 613.2 1099.8 598.3 1111.0 591.0 C1122.2 583.7 1121.5 585.5 1132.0 581.0 C1142.5 576.5 1155.3 568.0 1174.0 564.0 C1192.7 560.0 1220.6 557.0 1244.0 557.0 C1267.4 557.0 1293.9 558.4 1314.5 564.0 C1335.1 569.6 1350.6 578.1 1367.5 590.7 C1384.4 603.3 1403.2 623.9 1416.0 639.6 C1428.8 655.3 1437.5 669.9 1444.0 685.0 C1450.5 700.1 1452.7 716.2 1455.0 730.0 C1457.3 743.8 1457.5 761.7 1458.0 768.0 L1462 880 L1000 880Z" fill="url(#gEndFill)" stroke="url(#gEndStroke)" stroke-width="1.1"/>
<circle cx="1250" cy="897" r="238" fill="#fbfbfb" stroke="#a8a8a8" stroke-width="1"/>
<circle cx="1250" cy="897" r="246" fill="none" stroke="#b8b8b8" stroke-width="1"/>
<!-- right inner wall (darker) -->
<path d="M1334 674 A238 238 0 0 1 1487 880 L1431 880 Z" fill="#ececec"/>
<path d="M1334 674 A238 238 0 0 1 1398 711 C1406 730 1412 750 1414 770 L1422 880 L1431 880 Z" fill="#dcdcdc"/>
<path d="M1398 711 C1406 730 1412 750 1414 770" fill="none" stroke="#c4c4c4" stroke-width="1"/>
</g>
<!-- axis line -->
<line x1="1087" y1="40" x2="1130" y2="256" stroke="#444" stroke-width="1.3"/>
<!-- piston -->
<g id="piston">
<path d="M1158.0 252.0 C1169.3 252.5 1183.0 254.7 1195.0 258.0 C1207.0 261.3 1219.2 267.2 1230.0 272.0 C1240.8 276.8 1252.0 282.8 1260.0 287.0 C1268.0 291.2 1271.5 292.5 1278.0 297.0 C1284.5 301.5 1292.7 307.7 1299.0 314.0 C1305.3 320.3 1311.0 328.0 1316.0 335.0 C1321.0 342.0 1325.5 349.5 1329.0 356.0 C1332.5 362.5 1334.8 368.0 1337.0 374.0 C1339.2 380.0 1340.5 385.0 1342.0 392.0 C1343.5 399.0 1344.7 408.2 1346.0 416.0 C1347.3 423.8 1348.5 430.0 1350.0 439.0 C1351.5 448.0 1353.0 460.2 1355.0 470.0 C1357.0 479.8 1359.5 487.2 1362.0 498.0 C1364.5 508.8 1368.3 523.8 1370.0 535.0 C1371.7 546.2 1372.7 554.2 1372.0 565.0 C1371.3 575.8 1369.3 588.3 1366.0 600.0 C1362.7 611.7 1357.8 624.2 1352.0 635.0 C1346.2 645.8 1339.7 655.8 1331.0 665.0 C1322.3 674.2 1311.8 682.5 1300.0 690.0 C1288.2 697.5 1274.2 704.5 1260.0 710.0 C1245.8 715.5 1228.5 720.0 1215.0 723.0 C1201.5 726.0 1190.7 727.5 1179.0 728.0 C1167.3 728.5 1155.3 727.3 1145.0 726.0 C1134.7 724.7 1129.2 724.3 1117.0 720.0 C1104.8 715.7 1083.5 706.7 1072.0 700.0 C1060.5 693.3 1054.8 686.7 1048.0 680.0 C1041.2 673.3 1037.0 670.0 1031.0 660.0 C1025.0 650.0 1016.7 633.3 1012.0 620.0 C1007.3 606.7 1005.3 593.3 1003.0 580.0 C1000.7 566.7 1000.3 553.3 998.0 540.0 C995.7 526.7 991.8 512.5 989.0 500.0 C986.2 487.5 982.8 475.5 981.0 465.0 C979.2 454.5 977.8 446.2 978.0 437.0 C978.2 427.8 979.9 418.7 982.0 410.0 C984.1 401.3 986.5 394.2 990.5 385.0 C994.5 375.8 1000.9 364.3 1006.0 355.0 C1011.1 345.7 1017.0 335.7 1021.0 329.0 C1025.0 322.3 1025.8 320.0 1030.0 315.0 C1034.2 310.0 1040.3 304.0 1046.0 299.0 C1051.7 294.0 1057.5 289.5 1064.0 285.0 C1070.5 280.5 1074.5 277.0 1085.0 272.0 C1095.5 267.0 1114.8 258.3 1127.0 255.0 C1139.2 251.7 1146.7 251.5 1158.0 252.0Z" fill="#1c30dc"/>
<g clip-path="url(#cpPiston)">
<path d="M979.5 462.9 C979.3 459.4 978.0 449.9 978.5 441.9 C979.0 433.9 980.4 423.6 982.5 414.9 C984.6 406.3 987.0 399.1 991.0 389.9 C995.0 380.8 1001.4 369.3 1006.5 359.9 C1011.6 350.6 1017.6 340.6 1021.6 333.9 C1025.6 327.3 1026.4 324.9 1030.6 319.9 C1034.8 314.9 1040.9 308.9 1046.6 303.9 C1052.3 298.9 1058.1 294.4 1064.7 289.9 C1071.2 285.4 1075.2 281.9 1085.7 276.9 C1096.2 271.9 1115.6 263.3 1127.8 259.9 C1140.0 256.6 1147.5 256.4 1158.8 256.9 C1170.2 257.4 1183.9 259.6 1195.9 262.9 C1207.9 266.3 1220.1 272.1 1231.0 276.9 C1241.8 281.8 1253.0 287.8 1261.0 291.9 C1269.1 296.1 1272.6 297.4 1279.1 301.9 C1285.6 306.4 1293.8 312.6 1300.1 318.9 C1306.5 325.3 1312.1 332.9 1317.2 339.9 C1322.2 346.9 1326.7 354.4 1330.2 360.9 C1333.7 367.4 1336.0 372.9 1338.2 378.9 C1340.4 384.9 1341.7 389.9 1343.2 396.9 C1344.7 403.9 1345.9 413.1 1347.2 420.9 C1348.5 428.8 1350.0 436.9 1351.2 443.9 C1352.4 450.9 1353.7 459.8 1354.2 462.9 L1414.2 800 L1039.5 800Z" fill="#2042ee"/>
<path d="M980.7 475.7 C980.6 472.2 979.2 462.7 979.7 454.7 C980.2 446.7 981.6 436.3 983.7 427.7 C985.8 419.0 988.3 411.8 992.3 402.7 C996.3 393.5 1002.8 382.0 1007.9 372.7 C1013.0 363.3 1019.0 353.3 1023.0 346.7 C1027.0 340.0 1027.9 337.7 1032.1 332.7 C1036.3 327.7 1042.5 321.7 1048.2 316.7 C1053.9 311.7 1059.8 307.2 1066.3 302.7 C1072.9 298.2 1076.9 294.7 1087.5 289.7 C1098.0 284.7 1117.5 276.0 1129.8 272.7 C1142.0 269.3 1149.6 269.2 1161.0 269.7 C1172.4 270.2 1186.2 272.3 1198.2 275.7 C1210.3 279.0 1222.6 284.8 1233.5 289.7 C1244.4 294.5 1255.7 300.5 1263.7 304.7 C1271.8 308.8 1275.3 310.2 1281.8 314.7 C1288.4 319.2 1296.6 325.3 1303.0 331.7 C1309.4 338.0 1315.1 345.7 1320.1 352.7 C1325.1 359.7 1329.7 367.2 1333.2 373.7 C1336.7 380.2 1339.1 385.7 1341.3 391.7 C1343.4 397.7 1344.8 402.7 1346.3 409.7 C1347.8 416.7 1349.0 425.8 1350.3 433.7 C1351.7 441.5 1353.2 449.7 1354.3 456.7 C1355.5 463.7 1356.9 472.5 1357.4 475.7 L1417.4 800 L1040.7 800Z" fill="#1828dc"/>
<path d="M982.2 491.0 C982.1 487.5 980.7 478.0 981.2 470.0 C981.7 462.0 983.1 451.7 985.3 443.0 C987.4 434.3 989.8 427.2 993.9 418.0 C997.9 408.8 1004.4 397.3 1009.6 388.0 C1014.7 378.7 1020.7 368.7 1024.8 362.0 C1028.8 355.3 1029.7 353.0 1033.9 348.0 C1038.1 343.0 1044.4 337.0 1050.1 332.0 C1055.8 327.0 1061.8 322.5 1068.3 318.0 C1074.9 313.5 1079.0 310.0 1089.6 305.0 C1100.3 300.0 1119.8 291.3 1132.2 288.0 C1144.5 284.7 1152.1 284.5 1163.6 285.0 C1175.1 285.5 1188.9 287.7 1201.1 291.0 C1213.2 294.3 1225.6 300.2 1236.5 305.0 C1247.5 309.8 1258.8 315.8 1266.9 320.0 C1275.0 324.2 1278.6 325.5 1285.2 330.0 C1291.8 334.5 1300.0 340.7 1306.4 347.0 C1312.9 353.3 1318.6 361.0 1323.7 368.0 C1328.7 375.0 1333.3 382.5 1336.8 389.0 C1340.4 395.5 1342.8 401.0 1344.9 407.0 C1347.1 413.0 1348.5 418.0 1350.0 425.0 C1351.5 432.0 1352.7 441.2 1354.1 449.0 C1355.4 456.8 1356.9 465.0 1358.1 472.0 C1359.3 479.0 1360.7 487.8 1361.2 491.0 L1421.2 800 L1042.2 800Z" fill="#2a54f4"/>
<path d="M983.3 501.7 C983.1 498.2 981.7 488.7 982.3 480.7 C982.8 472.7 984.2 462.4 986.3 453.7 C988.4 445.1 990.9 437.9 995.0 428.7 C999.0 419.6 1005.6 408.1 1010.7 398.7 C1015.9 389.4 1021.9 379.4 1026.0 372.7 C1030.1 366.1 1030.9 363.7 1035.2 358.7 C1039.4 353.7 1045.7 347.7 1051.4 342.7 C1057.2 337.7 1063.1 333.2 1069.8 328.7 C1076.4 324.2 1080.4 320.7 1091.1 315.7 C1101.8 310.7 1121.5 302.1 1133.9 298.7 C1146.2 295.4 1153.9 295.2 1165.4 295.7 C1176.9 296.2 1190.8 298.4 1203.0 301.7 C1215.3 305.1 1227.6 310.9 1238.7 315.7 C1249.7 320.6 1261.0 326.6 1269.2 330.7 C1277.3 334.9 1280.9 336.2 1287.5 340.7 C1294.1 345.2 1302.4 351.4 1308.9 357.7 C1315.3 364.1 1321.1 371.7 1326.2 378.7 C1331.2 385.7 1335.8 393.2 1339.4 399.7 C1343.0 406.2 1345.3 411.7 1347.5 417.7 C1349.7 423.7 1351.1 428.7 1352.6 435.7 C1354.1 442.7 1355.3 451.9 1356.7 459.7 C1358.0 467.6 1359.6 475.7 1360.8 482.7 C1361.9 489.7 1363.3 498.6 1363.8 501.7 L1423.8 800 L1043.3 800Z" fill="#2038ea"/>
<path d="M983.9 508.7 C983.8 505.2 982.4 495.7 982.9 487.7 C983.4 479.7 984.9 469.3 987.0 460.7 C989.1 452.0 991.6 444.8 995.7 435.7 C999.8 426.5 1006.3 415.0 1011.5 405.7 C1016.7 396.3 1022.7 386.3 1026.8 379.7 C1030.9 373.0 1031.7 370.7 1036.0 365.7 C1040.2 360.7 1046.5 354.7 1052.3 349.7 C1058.1 344.7 1064.0 340.2 1070.7 335.7 C1077.3 331.2 1081.4 327.7 1092.1 322.7 C1102.8 317.7 1122.5 309.0 1134.9 305.7 C1147.4 302.3 1155.0 302.2 1166.6 302.7 C1178.1 303.2 1192.1 305.3 1204.3 308.7 C1216.6 312.0 1229.0 317.8 1240.0 322.7 C1251.1 327.5 1262.5 333.5 1270.6 337.7 C1278.8 341.8 1282.4 343.2 1289.0 347.7 C1295.6 352.2 1304.0 358.3 1310.4 364.7 C1316.9 371.0 1322.7 378.7 1327.8 385.7 C1332.9 392.7 1337.5 400.2 1341.0 406.7 C1344.6 413.2 1347.0 418.7 1349.2 424.7 C1351.4 430.7 1352.8 435.7 1354.3 442.7 C1355.8 449.7 1357.0 458.8 1358.4 466.7 C1359.7 474.5 1361.3 482.7 1362.5 489.7 C1363.7 496.7 1365.0 505.5 1365.5 508.7 L1425.5 800 L1043.9 800Z" fill="#2a30f3"/>
<path d="M1290 300 L1400 300 L1400 700 L1330 700 Z" fill="url(#gPistR)"/>
<path d="M979.5 462.9 C979.3 459.4 978.0 449.9 978.5 441.9 C979.0 433.9 980.4 423.6 982.5 414.9 C984.6 406.3 987.0 399.1 991.0 389.9 C995.0 380.8 1001.4 369.3 1006.5 359.9 C1011.6 350.6 1017.6 340.6 1021.6 333.9 C1025.6 327.3 1026.4 324.9 1030.6 319.9 C1034.8 314.9 1040.9 308.9 1046.6 303.9 C1052.3 298.9 1058.1 294.4 1064.7 289.9 C1071.2 285.4 1075.2 281.9 1085.7 276.9 C1096.2 271.9 1115.6 263.3 1127.8 259.9 C1140.0 256.6 1147.5 256.4 1158.8 256.9 C1170.2 257.4 1183.9 259.6 1195.9 262.9 C1207.9 266.3 1220.1 272.1 1231.0 276.9 C1241.8 281.8 1253.0 287.8 1261.0 291.9 C1269.1 296.1 1272.6 297.4 1279.1 301.9 C1285.6 306.4 1293.8 312.6 1300.1 318.9 C1306.5 325.3 1312.1 332.9 1317.2 339.9 C1322.2 346.9 1326.7 354.4 1330.2 360.9 C1333.7 367.4 1336.0 372.9 1338.2 378.9 C1340.4 384.9 1341.7 389.9 1343.2 396.9 C1344.7 403.9 1345.9 413.1 1347.2 420.9 C1348.5 428.8 1350.0 436.9 1351.2 443.9 C1352.4 450.9 1353.7 459.8 1354.2 462.9" fill="none" stroke="#0b1470" stroke-width="1.3" stroke-opacity="0.85"/>
<path d="M980.7 475.7 C980.6 472.2 979.2 462.7 979.7 454.7 C980.2 446.7 981.6 436.3 983.7 427.7 C985.8 419.0 988.3 411.8 992.3 402.7 C996.3 393.5 1002.8 382.0 1007.9 372.7 C1013.0 363.3 1019.0 353.3 1023.0 346.7 C1027.0 340.0 1027.9 337.7 1032.1 332.7 C1036.3 327.7 1042.5 321.7 1048.2 316.7 C1053.9 311.7 1059.8 307.2 1066.3 302.7 C1072.9 298.2 1076.9 294.7 1087.5 289.7 C1098.0 284.7 1117.5 276.0 1129.8 272.7 C1142.0 269.3 1149.6 269.2 1161.0 269.7 C1172.4 270.2 1186.2 272.3 1198.2 275.7 C1210.3 279.0 1222.6 284.8 1233.5 289.7 C1244.4 294.5 1255.7 300.5 1263.7 304.7 C1271.8 308.8 1275.3 310.2 1281.8 314.7 C1288.4 319.2 1296.6 325.3 1303.0 331.7 C1309.4 338.0 1315.1 345.7 1320.1 352.7 C1325.1 359.7 1329.7 367.2 1333.2 373.7 C1336.7 380.2 1339.1 385.7 1341.3 391.7 C1343.4 397.7 1344.8 402.7 1346.3 409.7 C1347.8 416.7 1349.0 425.8 1350.3 433.7 C1351.7 441.5 1353.2 449.7 1354.3 456.7 C1355.5 463.7 1356.9 472.5 1357.4 475.7" fill="none" stroke="#0b1470" stroke-width="1.3" stroke-opacity="0.85"/>
<path d="M982.2 491.0 C982.1 487.5 980.7 478.0 981.2 470.0 C981.7 462.0 983.1 451.7 985.3 443.0 C987.4 434.3 989.8 427.2 993.9 418.0 C997.9 408.8 1004.4 397.3 1009.6 388.0 C1014.7 378.7 1020.7 368.7 1024.8 362.0 C1028.8 355.3 1029.7 353.0 1033.9 348.0 C1038.1 343.0 1044.4 337.0 1050.1 332.0 C1055.8 327.0 1061.8 322.5 1068.3 318.0 C1074.9 313.5 1079.0 310.0 1089.6 305.0 C1100.3 300.0 1119.8 291.3 1132.2 288.0 C1144.5 284.7 1152.1 284.5 1163.6 285.0 C1175.1 285.5 1188.9 287.7 1201.1 291.0 C1213.2 294.3 1225.6 300.2 1236.5 305.0 C1247.5 309.8 1258.8 315.8 1266.9 320.0 C1275.0 324.2 1278.6 325.5 1285.2 330.0 C1291.8 334.5 1300.0 340.7 1306.4 347.0 C1312.9 353.3 1318.6 361.0 1323.7 368.0 C1328.7 375.0 1333.3 382.5 1336.8 389.0 C1340.4 395.5 1342.8 401.0 1344.9 407.0 C1347.1 413.0 1348.5 418.0 1350.0 425.0 C1351.5 432.0 1352.7 441.2 1354.1 449.0 C1355.4 456.8 1356.9 465.0 1358.1 472.0 C1359.3 479.0 1360.7 487.8 1361.2 491.0" fill="none" stroke="#0b1470" stroke-width="1.3" stroke-opacity="0.85"/>
<path d="M983.3 501.7 C983.1 498.2 981.7 488.7 982.3 480.7 C982.8 472.7 984.2 462.4 986.3 453.7 C988.4 445.1 990.9 437.9 995.0 428.7 C999.0 419.6 1005.6 408.1 1010.7 398.7 C1015.9 389.4 1021.9 379.4 1026.0 372.7 C1030.1 366.1 1030.9 363.7 1035.2 358.7 C1039.4 353.7 1045.7 347.7 1051.4 342.7 C1057.2 337.7 1063.1 333.2 1069.8 328.7 C1076.4 324.2 1080.4 320.7 1091.1 315.7 C1101.8 310.7 1121.5 302.1 1133.9 298.7 C1146.2 295.4 1153.9 295.2 1165.4 295.7 C1176.9 296.2 1190.8 298.4 1203.0 301.7 C1215.3 305.1 1227.6 310.9 1238.7 315.7 C1249.7 320.6 1261.0 326.6 1269.2 330.7 C1277.3 334.9 1280.9 336.2 1287.5 340.7 C1294.1 345.2 1302.4 351.4 1308.9 357.7 C1315.3 364.1 1321.1 371.7 1326.2 378.7 C1331.2 385.7 1335.8 393.2 1339.4 399.7 C1343.0 406.2 1345.3 411.7 1347.5 417.7 C1349.7 423.7 1351.1 428.7 1352.6 435.7 C1354.1 442.7 1355.3 451.9 1356.7 459.7 C1358.0 467.6 1359.6 475.7 1360.8 482.7 C1361.9 489.7 1363.3 498.6 1363.8 501.7" fill="none" stroke="#0b1470" stroke-width="1.3" stroke-opacity="0.85"/>
<path d="M983.9 508.7 C983.8 505.2 982.4 495.7 982.9 487.7 C983.4 479.7 984.9 469.3 987.0 460.7 C989.1 452.0 991.6 444.8 995.7 435.7 C999.8 426.5 1006.3 415.0 1011.5 405.7 C1016.7 396.3 1022.7 386.3 1026.8 379.7 C1030.9 373.0 1031.7 370.7 1036.0 365.7 C1040.2 360.7 1046.5 354.7 1052.3 349.7 C1058.1 344.7 1064.0 340.2 1070.7 335.7 C1077.3 331.2 1081.4 327.7 1092.1 322.7 C1102.8 317.7 1122.5 309.0 1134.9 305.7 C1147.4 302.3 1155.0 302.2 1166.6 302.7 C1178.1 303.2 1192.1 305.3 1204.3 308.7 C1216.6 312.0 1229.0 317.8 1240.0 322.7 C1251.1 327.5 1262.5 333.5 1270.6 337.7 C1278.8 341.8 1282.4 343.2 1289.0 347.7 C1295.6 352.2 1304.0 358.3 1310.4 364.7 C1316.9 371.0 1322.7 378.7 1327.8 385.7 C1332.9 392.7 1337.5 400.2 1341.0 406.7 C1344.6 413.2 1347.0 418.7 1349.2 424.7 C1351.4 430.7 1352.8 435.7 1354.3 442.7 C1355.8 449.7 1357.0 458.8 1358.4 466.7 C1359.7 474.5 1361.3 482.7 1362.5 489.7 C1363.7 496.7 1365.0 505.5 1365.5 508.7" fill="none" stroke="#0b1470" stroke-width="1.3" stroke-opacity="0.85"/>
</g>
<ellipse cx="1015" cy="464" rx="51" ry="16" transform="rotate(105 1015 464)" fill="#2a3cf2" stroke="#0b1470" stroke-width="1.3"/>
<ellipse cx="1017" cy="464" rx="46" ry="11" transform="rotate(105 1017 464)" fill="#2a40f4" stroke="#0b1470" stroke-width="1.2"/>
<g clip-path="url(#cpPiston)">
<ellipse cx="1184" cy="572.5" rx="179" ry="155.5" fill="#2030e8" stroke="#0b1470" stroke-width="1.3"/>
<ellipse cx="1185.5" cy="577" rx="168.5" ry="147" fill="#2232ea" stroke="#0b1470" stroke-width="1.3"/>
</g>
<path d="M1158.0 252.0 C1169.3 252.5 1183.0 254.7 1195.0 258.0 C1207.0 261.3 1219.2 267.2 1230.0 272.0 C1240.8 276.8 1252.0 282.8 1260.0 287.0 C1268.0 291.2 1271.5 292.5 1278.0 297.0 C1284.5 301.5 1292.7 307.7 1299.0 314.0 C1305.3 320.3 1311.0 328.0 1316.0 335.0 C1321.0 342.0 1325.5 349.5 1329.0 356.0 C1332.5 362.5 1334.8 368.0 1337.0 374.0 C1339.2 380.0 1340.5 385.0 1342.0 392.0 C1343.5 399.0 1344.7 408.2 1346.0 416.0 C1347.3 423.8 1348.5 430.0 1350.0 439.0 C1351.5 448.0 1353.0 460.2 1355.0 470.0 C1357.0 479.8 1359.5 487.2 1362.0 498.0 C1364.5 508.8 1368.3 523.8 1370.0 535.0 C1371.7 546.2 1372.7 554.2 1372.0 565.0 C1371.3 575.8 1369.3 588.3 1366.0 600.0 C1362.7 611.7 1357.8 624.2 1352.0 635.0 C1346.2 645.8 1339.7 655.8 1331.0 665.0 C1322.3 674.2 1311.8 682.5 1300.0 690.0 C1288.2 697.5 1274.2 704.5 1260.0 710.0 C1245.8 715.5 1228.5 720.0 1215.0 723.0 C1201.5 726.0 1190.7 727.5 1179.0 728.0 C1167.3 728.5 1155.3 727.3 1145.0 726.0 C1134.7 724.7 1129.2 724.3 1117.0 720.0 C1104.8 715.7 1083.5 706.7 1072.0 700.0 C1060.5 693.3 1054.8 686.7 1048.0 680.0 C1041.2 673.3 1037.0 670.0 1031.0 660.0 C1025.0 650.0 1016.7 633.3 1012.0 620.0 C1007.3 606.7 1005.3 593.3 1003.0 580.0 C1000.7 566.7 1000.3 553.3 998.0 540.0 C995.7 526.7 991.8 512.5 989.0 500.0 C986.2 487.5 982.8 475.5 981.0 465.0 C979.2 454.5 977.8 446.2 978.0 437.0 C978.2 427.8 979.9 418.7 982.0 410.0 C984.1 401.3 986.5 394.2 990.5 385.0 C994.5 375.8 1000.9 364.3 1006.0 355.0 C1011.1 345.7 1017.0 335.7 1021.0 329.0 C1025.0 322.3 1025.8 320.0 1030.0 315.0 C1034.2 310.0 1040.3 304.0 1046.0 299.0 C1051.7 294.0 1057.5 289.5 1064.0 285.0 C1070.5 280.5 1074.5 277.0 1085.0 272.0 C1095.5 267.0 1114.8 258.3 1127.0 255.0 C1139.2 251.7 1146.7 251.5 1158.0 252.0Z" fill="none" stroke="#0a1280" stroke-width="1.6"/>
</g>
<!-- piston interior -->
<g id="interior">
<!-- floor sector -->
<path d="M1140 470 L1063 630 C1070 645 1078 653 1090 662 C1115 678 1150 692 1190 699 L1300 699 L1300 560 Z" fill="#2a2eea"/>
<path d="M1140 470 L1063 630 C1070 645 1078 653 1090 662 C1115 678 1150 692 1190 699 L1230 700" fill="none" stroke="#0b1470" stroke-width="1.2"/>
<!-- pocket -->
<path id="pocket" d="M1140 470.5 C1165 464 1188 460 1210 460 C1230 461 1248 466 1263 473 C1272 478 1280 483 1286 489 C1298 499 1308 510 1316 522 L1291 578 L1300 600 L1150 600 L1136 590 L1094 571 L1115 515 Z" fill="#2a62ee"/>
<g clip-path="url(#cpPocket)">
<path d="M1162 482 L1183 482 L1211 490 L1235 496 C1250 502 1260 512 1265 527 L1300 600 L1140 600 L1124 557 C1119 545 1122 530 1130 517 C1138 500 1148 484 1162 482Z" fill="none" stroke="#4aa8f4" stroke-width="24" stroke-opacity="0.75" filter="url(#blur8)"/>
<path d="M1162 482 L1183 482 L1211 490 L1235 496 C1250 502 1260 512 1265 527 L1300 600 L1140 600 L1124 557 C1119 545 1122 530 1130 517 C1138 500 1148 484 1162 482Z" fill="none" stroke="#86e0f8" stroke-width="7" stroke-opacity="0.9" filter="url(#blur3)"/>
</g>
<path d="M1140 470.5 C1165 464 1188 460 1210 460 C1230 461 1248 466 1263 473 C1272 478 1280 483 1286 489 C1298 499 1308 510 1316 522 L1291 578" fill="none" stroke="#0b1470" stroke-width="1.3"/>
<path d="M1140 470.5 L1115 515 L1094 571 L1084 586" fill="none" stroke="#0b1470" stroke-width="1.3"/>
<path d="M1094 571 L1136 590" fill="none" stroke="#0b1470" stroke-width="1"/>
<path d="M1210 460 L1209 489" fill="none" stroke="#0b1470" stroke-width="1.2"/>
<path d="M1284 487 C1287 510 1284 530 1274 551 M1288 491 C1292 512 1289 534 1279 556" fill="none" stroke="#0b1470" stroke-width="1.2"/>
</g>
<g clip-path="url(#cpInner)"><path d="M960 240 H1400 V740 H960Z" fill="#0410c8" fill-opacity="0.5" clip-path="url(#cpPiston)"/></g>
<!-- rod -->
<g id="rod">
<path id="rodp" d="M1162 482 L1183 482 L1211 490 L1235 496 C1250 502 1260 512 1265 527 L1431 880 L1272 880 L1124 557 C1119 545 1122 530 1130 517 C1138 500 1148 484 1162 482Z" fill="url(#gRod)"/>
<!-- strips -->
<path d="M1124 557 L1272 880 L1288 880 L1136 560 Z" fill="#20b4ee" fill-opacity="0.6"/>
<path d="M1254 560 L1265 527 L1431 880 L1393 880 Z" fill="#28bcf0" fill-opacity="0.4"/>
<g clip-path="url(#cpInner)">
<path d="M1162 482 L1183 482 L1211 490 L1235 496 C1250 502 1260 512 1265 527 L1431 880 L1272 880 L1124 557Z" fill="#06c6ff" fill-opacity="0.75"/>
</g>
<g stroke="#0a3a58" stroke-width="1.2" fill="none">
<path d="M1123.4 537 L1288 880"/>
<path d="M1130.4 517.4 L1165.6 588 L1305 880"/>
<path d="M1183 482 L1233.6 588 L1372 880"/>
<path d="M1211 490 L1254.7 588 L1393 880"/>
<path d="M1235 496 L1275.8 588 L1414 880"/>
<path d="M1162 482 L1183 482 L1211 490 L1235 496 C1250 502 1260 512 1265 527 L1431 880 M1272 880 L1124 557 C1119 545 1122 530 1130 517" stroke-width="1.4"/>
</g>
<!-- hot spots -->
<path d="M1131 516 C1123 530 1119 544 1124 557" fill="none" stroke="#b8ff20" stroke-width="2.2" filter="url(#blur1)"/>
<path d="M1130 512 C1120 528 1114 545 1120 560" fill="none" stroke="#30ff60" stroke-width="2.5" stroke-opacity="0.8" filter="url(#blur1)"/>
<path d="M1236 494 C1252 499 1263 511 1268 526" fill="none" stroke="#a0ff40" stroke-width="1.4" filter="url(#blur1)"/>
<path d="M1185 480 L1212 488 L1236 494" fill="none" stroke="#60ffb0" stroke-width="1.5" stroke-opacity="0.8" filter="url(#blur1)"/>
</g>
<!-- faint tube-end arc over piston/rod -->
<path d="M1028.0 662.0 C1037.1 652.0 1050.8 636.8 1064.6 625.0 C1078.4 613.2 1099.8 598.3 1111.0 591.0 C1122.2 583.7 1121.5 585.5 1132.0 581.0 C1142.5 576.5 1155.3 568.0 1174.0 564.0 C1192.7 560.0 1220.6 557.0 1244.0 557.0 C1267.4 557.0 1293.9 558.4 1314.5 564.0 C1335.1 569.6 1350.6 578.1 1367.5 590.7" fill="none" stroke="#9fb8f0" stroke-opacity="0.28" stroke-width="1.2"/>
<path d="M1096 716 A238 238 0 0 1 1334 674" fill="none" stroke="#7a9ab0" stroke-opacity="0.7" stroke-width="1.6"/>
<path d="M1096 724 A246 246 0 0 1 1340 668" fill="none" stroke="#c8d8f0" stroke-opacity="0.35" stroke-width="1.2"/>
<g clip-path="url(#cpRod)"><path d="M1096 716 A238 238 0 0 1 1334 674" fill="none" stroke="#2a98d0" stroke-width="2" stroke-opacity="0.85"/><path d="M1096 713 A240 240 0 0 1 1336 671" fill="none" stroke="#6ad4f6" stroke-width="1.2" stroke-opacity="0.7"/></g>
<!-- axis line inside piston -->
<line x1="1128" y1="254" x2="1148" y2="365" stroke="#b8c4e8" stroke-opacity="0.75" stroke-width="1.3"/>
</g>
<!-- selection marker -->
<g id="selmark">
<path d="M1162 482 L1183 481" stroke="#6f8fb2" stroke-width="2.4" fill="none"/>
<path d="M1137 500 L1130 517" stroke="#6f8fb2" stroke-width="2.4" fill="none"/>
<rect x="1138" y="476" width="25" height="25" fill="#e8eef4" fill-opacity="0.8"/>
<ellipse cx="1151" cy="487.5" rx="7" ry="5.2" fill="#164ea8"/>
<path d="M1146 491 L1143 497" stroke="#4a74b0" stroke-width="1.2"/>
</g>
<!-- top translucent bar -->
<rect x="851" y="45" width="749" height="43.5" fill="#fff" fill-opacity="0.82"/>
<!-- legend -->
<rect x="894" y="106" width="706" height="69" fill="#fff" fill-opacity="0.78"/>
<rect x="995" y="112" width="750" height="25" fill="url(#gLegend)"/>
<g stroke="#444" stroke-width="2">
<line x1="995.5" y1="112" x2="995.5" y2="149"/><line x1="1146" y1="137" x2="1146" y2="149"/><line x1="1296.5" y1="137" x2="1296.5" y2="149"/><line x1="1447" y1="137" x2="1447" y2="149"/><line x1="1597.5" y1="137" x2="1597.5" y2="149"/>
</g>
<g font-family="'Liberation Mono',monospace" font-size="14.2" fill="#222" text-anchor="middle" stroke="#222" stroke-width="0.3">
<text x="995" y="166" fill="#4a78b8" stroke="#4a78b8" font-style="italic">0</text>
<text x="1146" y="166">1.039e+4</text>
<text x="1296.5" y="166">2.078e+4</text>
<text x="1447" y="166">3.117e+4</text>
<text x="1597.5" y="166">4.157e+4</text>
</g>
<!-- view cube -->
<g id="viewcube">
<g fill="#dfe6ee">
<path d="M1398 153 L1410 144 L1410 162Z"/>
<path d="M1581 150 L1569 141 L1569 159Z"/>
<path d="M1486 246 L1477 235 L1495 235Z"/>
<path d="M1412 101 L1412 88 L1425 88 L1421 92 C1428 86 1436 83 1444 82 L1444 86 C1437 88 1430 91 1424 96 L1426 101Z" />
<path d="M1553 101 L1553 88 L1540 88 L1544 92 C1537 86 1529 83 1521 82 L1521 86 C1528 88 1535 91 1541 96 L1539 101Z" />
</g>
<path d="M1456 103 L1474 98.5 L1532 113 L1536 147 L1507 208 L1443 188.5 L1441 144Z" fill="#d6dee8" stroke="#d6dee8" stroke-width="4" stroke-linejoin="round"/>
<path d="M1479 105 L1524 117 L1512 147 L1472 134Z" fill="#fbfcfd" stroke="#fbfcfd" stroke-width="5" stroke-linejoin="round"/>
<path d="M1466 152 L1505 160 L1497 200 L1455 184Z" fill="#fbfcfd" stroke="#fbfcfd" stroke-width="5" stroke-linejoin="round"/>
<path d="M1458 113 L1463 138 L1451 176 L1446 148Z" fill="#f4f7fa" stroke="#f4f7fa" stroke-width="4" stroke-linejoin="round"/>
<circle cx="1472" cy="135" r="4.5" fill="#fbfcfd"/><circle cx="1527" cy="151" r="4.5" fill="#f4f7fa"/><circle cx="1454" cy="186" r="4" fill="#f4f7fa"/>
<text transform="translate(1503.5,136) rotate(-76)" font-family="'Liberation Sans',sans-serif" font-size="10" fill="#333" textLength="21" lengthAdjust="spacingAndGlyphs">Back</text>
<text transform="translate(1484.5,189.5) rotate(-64)" font-family="'Liberation Sans',sans-serif" font-size="12.5" fill="#333" textLength="32" lengthAdjust="spacingAndGlyphs">Right</text>
<text transform="translate(1456,153) rotate(-78)" font-family="'Liberation Sans',sans-serif" font-size="6" fill="#444" textLength="22" lengthAdjust="spacingAndGlyphs">Bottom</text>
<line x1="1503" y1="173" x2="1531" y2="113" stroke="#3f9f3f" stroke-width="1.2"/>
<line x1="1503" y1="173" x2="1436" y2="155" stroke="#5a5ad8" stroke-width="1.2"/>
<line x1="1503" y1="173" x2="1512" y2="215" stroke="#e03030" stroke-width="1.2"/>
<path d="M1527 121 L1531 113" stroke="#2a6f2a" stroke-width="2.2"/>
<path d="M1458 161 L1464 162.5" stroke="#3535c0" stroke-width="2.2"/>
<path d="M1509 202 L1511.5 213" stroke="#c02020" stroke-width="2.2"/>
<g font-family="'Liberation Sans',sans-serif" font-weight="700" font-size="14" text-anchor="middle">
<text x="1535.5" y="110" fill="#2f9e3f">Y</text>
<text x="1423" y="157" fill="#3a3adf">Z</text>
<text x="1511" y="227" fill="#e02828">X</text>
</g>
</g>
<!-- cube dropdown -->
<g id="cubedd">
<path d="M1534 229 L1546 225.5 L1556 229 L1556 242 L1545 247 L1534 242Z" fill="#c9c9c9" stroke="#333" stroke-width="1.3" stroke-linejoin="round"/>
<path d="M1534 229 L1545 233 L1556 229 M1545 233 L1545 247" fill="none" stroke="#333" stroke-width="1.1"/>
<path d="M1534 229 L1546 225.5 L1556 229 L1545 233Z" fill="#f4f4f4" stroke="#333" stroke-width="1"/>
<path d="M1545 233 L1556 229 L1556 242 L1545 247Z" fill="#8c8c8c" stroke="#333" stroke-width="1"/>
<path d="M1564.5 234 L1573.5 234 L1569 239Z" fill="#222"/>
</g>
<!-- header controls -->
<path d="M1036 66 L1045 66 L1040.5 70.5Z" fill="#222"/>
<rect x="1094" y="64" width="14" height="14" rx="3" fill="#fff" stroke="#d8d8d8" stroke-width="1.2"/>
<path d="M1318.5 54.5 L1344 67.5 L1318.5 80Z" fill="#333"/>
<line x1="1557" y1="83.5" x2="1600" y2="83.5" stroke="#ddd" stroke-width="1"/>
</svg>
</div>
<span class="t" style="left:859.5px;top:62.6px;font-size:17px;font-weight:400;color:#222;letter-spacing:-0.017px;">von Mises stress (psi)</span>
<span class="t" style="left:1115.0px;top:63.0px;font-size:16.5px;font-weight:400;color:#777;letter-spacing:-0.218px;">Show deformation</span>
<span class="t" style="left:1420.2px;top:62.4px;font-size:16.5px;font-weight:400;color:#777;letter-spacing:-0.175px;">Deformation scale</span>
<span class="t" style="left:1570.5px;top:62.0px;font-size:17px;font-weight:400;color:#111;letter-spacing:-0.350px;transform:scaleX(0.9885);transform-origin:0 0;">720</span>
<!-- left toggle button -->
<div class="abs" style="left:849px;top:449px;width:42px;height:43px;background:#fff;border:1px solid #ccc;border-left:1px solid #fff"></div>
<!-- right toolbars -->
<div class="abs" style="left:1559px;top:256px;width:42px;height:250px;background:#fff;border:1px solid #ccc"></div>
<div class="abs" style="left:1559px;top:297px;width:41px;height:1px;background:#ccc"></div>
<div class="abs" style="left:1559px;top:339px;width:41px;height:1px;background:#ccc"></div>
<div class="abs" style="left:1559px;top:380px;width:41px;height:1px;background:#ccc"></div>
<div class="abs" style="left:1559px;top:422px;width:41px;height:1px;background:#ccc"></div>
<div class="abs" style="left:1559px;top:463px;width:41px;height:1px;background:#ccc"></div>
<div class="abs" style="left:1559px;top:518px;width:42px;height:167px;background:#fff;border:1px solid #ccc"></div>
<div class="abs" style="left:1559px;top:559px;width:41px;height:1px;background:#ccc"></div>
<div class="abs" style="left:1559px;top:601px;width:41px;height:1px;background:#ccc"></div>
<div class="abs" style="left:1559px;top:642px;width:41px;height:1px;background:#ccc"></div>
<div class="abs" style="left:1566.5px;top:524.5px;width:29px;height:29px;background:#d9d9d9;border-radius:2px"></div>
<div class="abs" style="left:1566.5px;top:566px;width:29px;height:29px;background:#d9d9d9;border-radius:2px"></div>
<div class="abs" style="left:1566.5px;top:607.5px;width:29px;height:29px;background:#d9d9d9;border-radius:2px"></div>
<div class="abs" style="left:1566.5px;top:649px;width:29px;height:29px;background:#d9d9d9;border-radius:2px"></div>
<svg class="abs" style="left:851px;top:256px" width="749" height="432" viewBox="851 256 749 432">
<!-- left toggle -->
<g stroke="#333" fill="none" stroke-width="1.5">
<path d="M857.8 461.4 L861.2 464 L864.6 461.4 M861.2 464 L861.2 483.2"/>
<path d="M867.6 462.5 L880 462.5 M864 469 L880 469 M864 475.2 L880 475.2 M864 481.5 L880 481.5" stroke="#555" stroke-width="1.5"/>
</g>
<!-- 1 list -->
<rect x="1568.4" y="268" width="23" height="21.4" rx="4.2" fill="#fff" stroke="#333" stroke-width="1.7"/>
<g fill="#333"><rect x="1572.4" y="272.6" width="11" height="2.6"/><rect x="1575" y="276.4" width="13" height="2.6"/><rect x="1575" y="280.2" width="13" height="2.6"/><rect x="1575" y="284" width="13" height="2.6"/></g>
<!-- 2 cube + grid -->
<g fill="#fff" stroke="#333" stroke-width="1.4" stroke-linejoin="round">
<path d="M1572.4 316.4 L1583.6 312 L1591.4 316.6 L1591.4 326 L1580.4 331 L1572.4 326.4Z"/>
<path d="M1572.4 316.4 L1580.4 320.8 L1591.4 316.6 M1580.4 320.8 L1580.4 331" fill="none"/>
</g>
<rect x="1567.2" y="307.4" width="12.4" height="10" fill="#8cb8f0" stroke="#2a6ad8" stroke-width="1.2"/>
<path d="M1571.3 307.4 L1571.3 317.4 M1575.5 307.4 L1575.5 317.4 M1567.2 310.7 L1579.6 310.7 M1567.2 314.1 L1579.6 314.1" stroke="#2a6ad8" stroke-width="1.1" fill="none"/>
<!-- 3 small cube -> part -->
<path d="M1569 351.6 L1572 350.4 L1576 351.6 L1576 356.4 L1572.6 357.8 L1569 356.4Z" fill="#9a9a9a" stroke="#555" stroke-width="1"/>
<path d="M1572.6 359.6 L1572.6 362.6 L1579 362.6" fill="none" stroke="#1b55c0" stroke-width="1.6" stroke-dasharray="2 1"/>
<g transform="translate(1575.6,357.6) scale(0.84)"><g fill="none" stroke="#555" stroke-width="1.5" stroke-linejoin="round"><path d="M8 1 L14.6 1 L18.3 4.6 L18.3 18.3 L4.3 18.3 L0.7 14.8 L0.7 9 L7.9 9Z" fill="#f2f2f2"/><path d="M4.3 18.3 L4.3 12.6 L0.7 9 M4.3 12.6 L11.6 12.6 L11.6 4.6 L8 1 M11.6 4.6 L18.3 4.6 M11.6 12.6 L7.9 9"/></g></g>
<!-- 4 rect + dashed -->
<rect x="1581.4" y="391.8" width="9.4" height="13.6" fill="none" stroke="#1b55c0" stroke-width="1.4" stroke-dasharray="2 1.4"/>
<rect x="1568.4" y="404.6" width="23" height="9.2" rx="2" fill="#fff" stroke="#333" stroke-width="1.5"/>
<circle cx="1585.6" cy="409.2" r="3.6" fill="#fff" stroke="#444" stroke-width="1.2"/><circle cx="1585.6" cy="409.2" r="1.5" fill="none" stroke="#555" stroke-width="0.9"/>
<!-- 5 polyhedron -->
<path d="M1578.6 434 L1586.6 438.6 L1588 448.6 L1579.6 455.2 L1570 449.6 L1571.4 439.6Z" fill="#fff"/>
<path d="M1578.6 434 L1571.4 439.6 L1578.8 445Z" fill="#b4d8f2"/><path d="M1578.6 434 L1586.6 438.6 L1578.8 445Z" fill="#9cc8ec"/>
<path d="M1571.4 439.6 L1570 449.6 L1578.8 445Z" fill="#1b50b4"/><path d="M1570 449.6 L1579.6 455.2 L1578.8 445Z" fill="#2460c8"/>
<path d="M1586.6 438.6 L1588 448.6 L1578.8 445Z" fill="#b0b0b0"/><path d="M1588 448.6 L1579.6 455.2 L1578.8 445Z" fill="#8a8a8a"/>
<path d="M1578.6 434 L1578.8 445 L1579.6 455.2 M1571.4 439.6 L1578.8 445 L1588 448.6 M1586.6 438.6 L1578.8 445 L1570 449.6" stroke="#fff" stroke-width="1" fill="none"/>
<!-- 6 (x) -->
<rect x="1567.4" y="473.4" width="10.4" height="9.6" fill="#fff" stroke="#444" stroke-width="1"/>
<path d="M1570.9 473.4 L1570.9 483 M1574.3 473.4 L1574.3 483 M1567.4 476.6 L1577.8 476.6 M1567.4 479.8 L1577.8 479.8" stroke="#444" stroke-width="1" fill="none"/>
<path d="M1570.4 477 C1567.4 483 1567.4 490 1570.4 496 M1589.4 477 C1592.6 483 1592.6 490 1589.4 496" fill="none" stroke="#222" stroke-width="2.6"/>
<text x="1580" y="494" font-family="'Liberation Serif',serif" font-style="italic" font-weight="700" font-size="22" text-anchor="middle" fill="#111">x</text>
<!-- lower group -->
<path d="M1569.4 528.6 L1577.4 528.6 L1592.6 549.6 L1584.6 549.6Z" fill="#1b3fd0"/><path d="M1573.4 528.6 L1577.4 528.6 L1592.6 549.6 L1588.6 549.6Z" fill="#4a8af0"/>
<path d="M1592.6 528.6 L1584.6 528.6 L1569.4 549.6 L1577.4 549.6Z" fill="#2a52e0"/><path d="M1592.6 528.6 L1588.6 528.6 L1573.4 549.6 L1577.4 549.6Z" fill="#5a9af4"/>
<circle cx="1581" cy="580.6" r="11.6" fill="#1b5fe0"/>
<path d="M1581 571.8 L1588.6 576.2 L1588.6 585 L1581 589.4 L1573.4 585 L1573.4 576.2Z" fill="#4ab050" stroke="#2f8fd0" stroke-width="1.4"/>
<circle cx="1581" cy="580.6" r="4" fill="#7a7a7a"/>
<path d="M1571.6 624 C1574.6 618.6 1579.6 617.2 1583 617.8" fill="none" stroke="#d8c040" stroke-width="1.8"/>
<path d="M1583 617.8 C1587 618.4 1589.8 620.6 1591 623.6" fill="none" stroke="#40a878" stroke-width="1.8"/>
<circle cx="1581" cy="625" r="3.6" fill="#555"/>
<text x="1581" y="674.6" font-family="'Liberation Serif',serif" font-size="31" text-anchor="middle" fill="#111" stroke="#111" stroke-width="0.4">R</text>
</svg>
</body>
</html>
